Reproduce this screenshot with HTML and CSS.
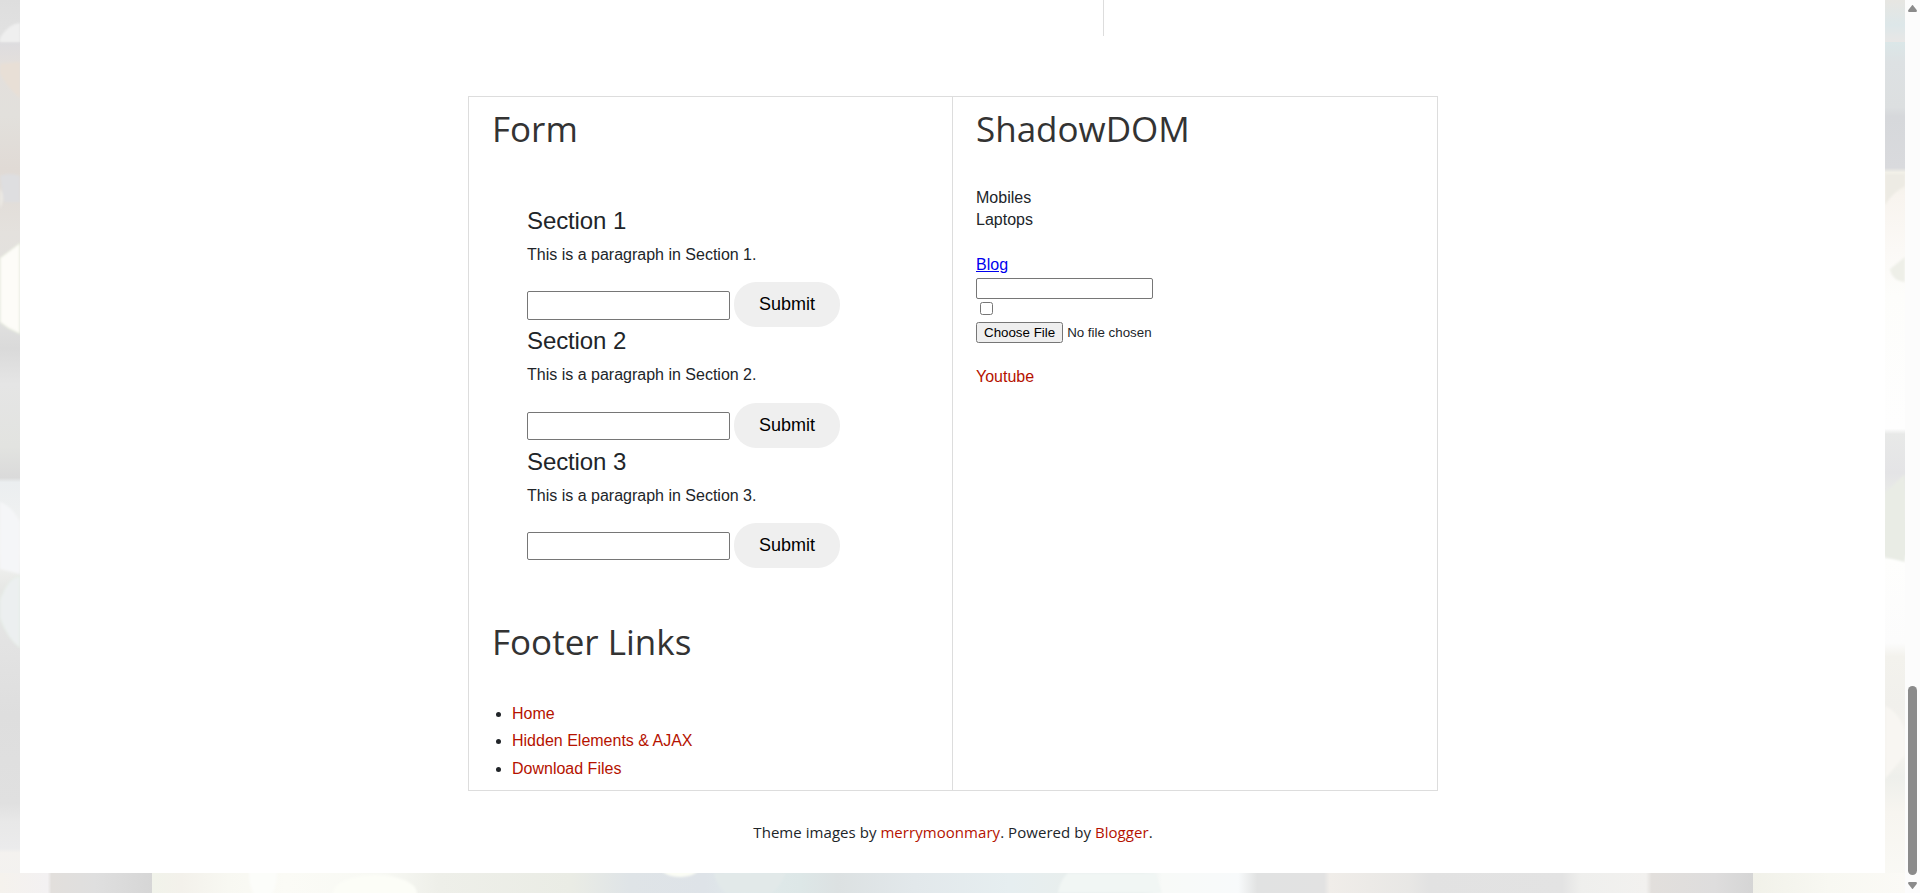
FILE: index.html
```html
<!DOCTYPE html>
<html lang="en">
<head>
<meta charset="utf-8">
<title>Form and ShadowDOM</title>
<link rel="stylesheet" href="styles.css">
</head>
<body>
<svg class="backdrop" width="1905" height="893" viewBox="0 0 1905 893" aria-hidden="true">
  <defs>
    <linearGradient id="left" x1="0" y1="0" x2="0" y2="893" gradientUnits="userSpaceOnUse">
      <stop offset="0" stop-color="#dedede"/><stop offset=".047" stop-color="#e2e2e2"/>
      <stop offset=".047" stop-color="#dddcdf"/><stop offset=".07" stop-color="#e3dfdc"/>
      <stop offset=".13" stop-color="#e2e0dc"/><stop offset=".19" stop-color="#e0dad5"/>
      <stop offset=".26" stop-color="#e4e1dd"/><stop offset=".36" stop-color="#e0e0df"/>
      <stop offset=".39" stop-color="#dadada"/><stop offset=".43" stop-color="#e5e5e5"/>
      <stop offset=".5" stop-color="#e2e3e0"/><stop offset=".535" stop-color="#dadada"/>
      <stop offset=".54" stop-color="#ebeef0"/><stop offset=".62" stop-color="#f4f4f2"/>
      <stop offset=".66" stop-color="#e6e7e5"/><stop offset=".72" stop-color="#e3e3e3"/>
      <stop offset=".8" stop-color="#dedede"/><stop offset=".9" stop-color="#e0e0e0"/>
      <stop offset=".92" stop-color="#e8e8e8"/><stop offset=".95" stop-color="#ebebec"/>
      <stop offset=".955" stop-color="#f4f2ef"/><stop offset="1" stop-color="#f2f1f0"/>
    </linearGradient>
    <linearGradient id="right" x1="0" y1="0" x2="0" y2="893" gradientUnits="userSpaceOnUse">
      <stop offset="0" stop-color="#e7e6e2"/><stop offset=".028" stop-color="#dde7e9"/>
      <stop offset=".047" stop-color="#e8e7e6"/><stop offset=".047" stop-color="#dbe7e8"/>
      <stop offset=".07" stop-color="#dde1e3"/><stop offset=".12" stop-color="#dcdfe0"/>
      <stop offset=".13" stop-color="#d6d8db"/><stop offset=".188" stop-color="#d9dadd"/>
      <stop offset=".193" stop-color="#f2f0e8"/><stop offset=".22" stop-color="#f8f4ef"/>
      <stop offset=".28" stop-color="#fbf9f6"/><stop offset=".33" stop-color="#fdfdfb"/>
      <stop offset=".48" stop-color="#fefefe"/><stop offset=".486" stop-color="#e8e9e8"/>
      <stop offset=".53" stop-color="#e4e4e6"/><stop offset=".56" stop-color="#ebede8"/>
      <stop offset=".62" stop-color="#e7eae4"/><stop offset=".627" stop-color="#fefefd"/>
      <stop offset=".72" stop-color="#fcfcfc"/><stop offset=".735" stop-color="#f3f2ed"/>
      <stop offset=".79" stop-color="#f1f0ec"/><stop offset=".84" stop-color="#f6f3ee"/>
      <stop offset=".87" stop-color="#eeefeb"/><stop offset=".91" stop-color="#f7f5f0"/>
      <stop offset="1" stop-color="#fafaf6"/>
    </linearGradient>
    <linearGradient id="bottom" x1="0" y1="0" x2="1905" y2="0" gradientUnits="userSpaceOnUse">
      <stop offset="0" stop-color="#f5f2ed"/><stop offset=".025" stop-color="#f3f1f2"/>
      <stop offset=".027" stop-color="#e2dfdc"/><stop offset=".05" stop-color="#dfdfdf"/>
      <stop offset=".08" stop-color="#d6d6d6"/><stop offset=".08" stop-color="#f1f3ea"/>
      <stop offset=".095" stop-color="#f3f1eb"/><stop offset=".12" stop-color="#f8f8f2"/>
      <stop offset=".15" stop-color="#fbfbf6"/><stop offset=".2" stop-color="#f8f9f4"/>
      <stop offset=".23" stop-color="#eeefe9"/><stop offset=".3" stop-color="#eaece5"/>
      <stop offset=".33" stop-color="#dfe4e7"/><stop offset=".37" stop-color="#dee3e8"/>
      <stop offset=".39" stop-color="#e1eaeb"/><stop offset=".42" stop-color="#dde7e7"/>
      <stop offset=".44" stop-color="#dce1e2"/><stop offset=".48" stop-color="#e2e8eb"/>
      <stop offset=".53" stop-color="#e6eef0"/><stop offset=".56" stop-color="#e8eeed"/>
      <stop offset=".6" stop-color="#e7edec"/><stop offset=".61" stop-color="#f8faf8"/>
      <stop offset=".65" stop-color="#f8fafb"/><stop offset=".66" stop-color="#e1e2e2"/>
      <stop offset=".695" stop-color="#e2e2e2"/><stop offset=".698" stop-color="#f0ede9"/>
      <stop offset=".74" stop-color="#e8e7e5"/><stop offset=".75" stop-color="#e2e2e2"/>
      <stop offset=".82" stop-color="#e3e3e3"/><stop offset=".83" stop-color="#efefed"/>
      <stop offset=".864" stop-color="#f2f1ef"/><stop offset=".867" stop-color="#e2dfdc"/>
      <stop offset=".9" stop-color="#dedddd"/><stop offset=".92" stop-color="#d5d5d5"/>
      <stop offset=".92" stop-color="#f1f1e9"/><stop offset=".96" stop-color="#f8f8f2"/>
      <stop offset="1" stop-color="#fbfaf6"/>
    </linearGradient>
    <filter id="soft" x="-20%" y="-20%" width="140%" height="140%"><feGaussianBlur stdDeviation="1"/></filter>
  </defs>
  <rect width="20" height="893" fill="url(#left)"/>
  <rect x="1885" width="20" height="893" fill="url(#right)"/>
  <rect y="873" width="1905" height="20" fill="url(#bottom)"/>
  <g filter="url(#soft)">
    <path d="M0 38Q8 24 20 23V42H0z" fill="#efefef"/>
    <path d="M0 64L20 62V98Q8 88 0 74z" fill="#e8dfd6"/>
    <path d="M0 176Q10 172 20 176V202H4z" fill="#dedee0"/>
    <path d="M0 188Q6 197 0 209z" fill="#eceae5"/>
    <path d="M0 258L20 243V334L8 328 0 322z" fill="#fdfcf8" stroke="#e7eddb"/>
    <path d="M0 502Q12 506 20 522V574L0 569z" fill="#f5f6f8"/>
    <path d="M0 600Q8 577 20 576V648Q7 638 0 618z" fill="#eceff0" stroke="#e5eee6"/>
    <path d="M1905 186Q1892 193 1885 205V174H1905z" fill="#edebe4"/>
    <path d="M1905 257L1890 269Q1892 281 1905 282z" fill="#eeefe8"/>
    <path d="M1885 493L1905 474V562L1885 557z" fill="#e9ece5"/>
    <path d="M1885 706Q1898 711 1905 731V755L1885 779z" fill="#f8f6f2"/>
    <ellipse cx="375" cy="893" rx="42" ry="18" fill="#fcfdf7"/>
    <ellipse cx="263" cy="873" rx="14" ry="28" fill="#fcfdfa"/>
    <ellipse cx="680" cy="868" rx="19" ry="9" fill="#fbfdf5"/>
    <path d="M714 873H786Q780 886 772 893H726Q716 884 714 873z" fill="#e2e9e9"/>
    <path d="M1058 893Q1060 880 1068 873H1155L1162 893z" fill="#f1f6f4"/>
  </g>
</svg>

<main class="page">
  <div class="upper-columns"></div>
  <footer class="footer">
    <div class="columns">
      <div class="column">
        <h2 class="title">Form</h2>
        <form class="form">
          <section class="section">
            <h3 class="section-title">Section 1</h3>
            <p class="section-text">This is a paragraph in Section 1.</p>
            <div class="field-row"><input class="field" type="text" aria-label="Section 1"><button class="submit" type="button">Submit</button></div>
          </section>
          <section class="section">
            <h3 class="section-title">Section 2</h3>
            <p class="section-text">This is a paragraph in Section 2.</p>
            <div class="field-row"><input class="field" type="text" aria-label="Section 2"><button class="submit" type="button">Submit</button></div>
          </section>
          <section class="section">
            <h3 class="section-title">Section 3</h3>
            <p class="section-text">This is a paragraph in Section 3.</p>
            <div class="field-row"><input class="field" type="text" aria-label="Section 3"><button class="submit" type="button">Submit</button></div>
          </section>
        </form>
        <h2 class="title">Footer Links</h2>
        <ul class="links">
          <li><a href="#">Home</a></li>
          <li><a href="#">Hidden Elements &amp; AJAX</a></li>
          <li><a href="#">Download Files</a></li>
        </ul>
      </div>
      <div class="column">
        <h2 class="title">ShadowDOM</h2>
        <div class="shadow">
          <div>Mobiles</div>
          <div>Laptops</div>
          <div class="blog"><a class="blog-link" href="#">Blog</a></div>
          <input class="shadow-text" type="text" aria-label="Text">
          <input class="shadow-check" type="checkbox" aria-label="Check">
          <input class="shadow-file" type="file" aria-label="File">
          <div><a href="#">Youtube</a></div>
        </div>
      </div>
    </div>
    <p class="credit">Theme images by <a href="#">merrymoonmary</a>. Powered by <a href="#">Blogger</a>.</p>
  </footer>
</main>

<div class="scrollbar" aria-hidden="true">
  <svg class="arrow" width="9" height="7" viewBox="0 0 9 7"><path d="M4.5 0Q5 0 5.5 1L8.7 5Q9.3 7 8 7H1Q-.3 7 .3 5L3.5 1Q4 0 4.5 0z"/></svg>
  <div class="thumb"></div>
  <svg class="arrow" width="9" height="7" viewBox="0 0 9 7"><path d="M4.5 7Q5 7 5.5 6L8.7 2Q9.3 0 8 0H1Q-.3 0 .3 2L3.5 6Q4 7 4.5 7z"/></svg>
</div>
</body>
</html>
```

FILE: styles.css
```css
* { box-sizing: border-box; }

body {
  margin: 0;
  height: 893px;
  overflow: hidden;
  display: flex;
  justify-content: space-between;
  font: 16px/22.4px "Liberation Sans", Arial, sans-serif;
  color: #212529;
}

a { color: #b51200; text-decoration: none; }

.backdrop { position: absolute; top: 0; left: 0; z-index: -1; }

.page {
  width: 1865px;
  height: 873px;
  margin-left: 20px;
  background: #fff;
}

.upper-columns {
  width: 1084px;
  height: 36px;
  border-right: 1px solid #ddd;
}

.footer {
  width: 970px;
  margin: 60px auto 0 448px;
}

.columns {
  display: grid;
  grid-template-columns: 483px 1fr;
  height: 695px;
  border: 1px solid #ddd;
}

.column { padding: 7.4px 23px 0; }
.column + .column { border-left: 1px solid #ddd; }

.title {
  margin: 0;
  font: 400 35px/50px "Open Sans", sans-serif;
  color: #333;
}

.form {
  padding: 52.6px 0 0 35px;
  height: 463px;
}

.section { height: 120.4px; }

.section-title {
  margin: 0 0 8px;
  font-size: 24px;
  font-weight: 400;
  line-height: 28.8px;
  letter-spacing: -.1px;
}

.section-text { margin: 0 0 16px; }

.field-row {
  display: flex;
  align-items: flex-start;
  gap: 4px;
}

.field {
  width: 203px;
  height: 28.2px;
  margin: 9.2px 0 0;
  border: 1px solid #767676;
  border-radius: 2px;
}

.submit {
  width: 106px;
  height: 45px;
  padding: 0;
  border: 0;
  border-radius: 22px;
  background: #efefef;
  color: #000;
  font: 18px "Liberation Sans", Arial, sans-serif;
}

.links {
  margin: 33px 0 0;
  padding-left: 20px;
}

.links li { padding: 2.5px 0; }

.shadow {
  display: flex;
  flex-direction: column;
  align-items: flex-start;
  padding-top: 32.6px;
}

.blog { margin-top: 22.4px; }
.blog-link { color: #00e; text-decoration: underline; }

.shadow-text {
  width: 177px;
  height: 21px;
  margin: 1px 0 0;
  border: 1px solid #767676;
  border-radius: 2px;
}

.shadow-check { width: 13px; height: 13px; margin: 3px 4px 7px; }

.shadow-file {
  height: 21px;
  margin-bottom: 23px;
  font: 13.333px "Liberation Sans", Arial, sans-serif;
}

.credit {
  margin: 29px 0 0;
  text-align: center;
  font: 15px/24px "Open Sans", sans-serif;
  letter-spacing: .05px;
}

.scrollbar {
  display: flex;
  flex-direction: column;
  align-items: center;
  width: 15px;
  height: 893px;
  padding: 5px 0 4px;
  background: #fcfcfc;
}

.arrow { fill: #8b8b8b; }

.thumb {
  width: 9px;
  height: 189px;
  margin: auto 0 7px;
  border-radius: 5px;
  background: #8b8b8b;
}
```
